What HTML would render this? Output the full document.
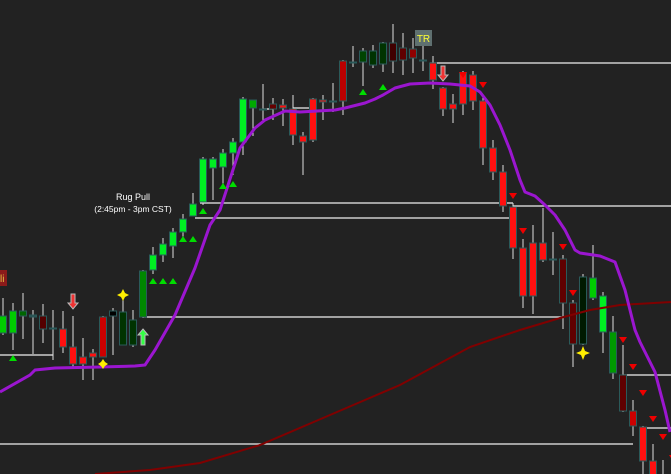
<!DOCTYPE html>
<html><head><meta charset="utf-8"><style>
html,body{margin:0;padding:0;background:#222222;width:671px;height:474px;overflow:hidden}
svg{display:block}
</style></head><body>
<svg id="s" width="671" height="474" xmlns="http://www.w3.org/2000/svg" style="font-family:'Liberation Sans',sans-serif">
<rect width="671" height="474" fill="#222"/>
<g stroke="#eee" stroke-width="1.3" fill="none">
<line x1="430" y1="63" x2="671" y2="63"/>
<line x1="200" y1="203" x2="513" y2="203"/>
<line x1="513" y1="206" x2="671" y2="206"/>
<line x1="195" y1="218" x2="513" y2="218"/>
<line x1="143" y1="317" x2="563" y2="317"/>
<line x1="0" y1="355" x2="53" y2="355"/>
<line x1="623" y1="375" x2="671" y2="375"/>
<line x1="643" y1="428" x2="671" y2="428"/>
<line x1="0" y1="444" x2="633" y2="444"/>
<line x1="263" y1="109" x2="273" y2="109"/>
<line x1="293" y1="108" x2="313" y2="108"/>
</g>
<g id="c"></g>
<polyline fill="none" stroke="#800000" stroke-width="2" points="95,474 150,470 200,463 260,445 330,415 400,385 470,347 520,330 560,318 590,310 620,305 671,302"/>
<polyline fill="none" stroke="#9b16d0" stroke-width="3" stroke-linejoin="round" points="0,392 30,375 35,370 55,368 100,367 135,366 145,365 155,350 175,315 195,268 210,225 220,210 240,148 255,128 265,120 285,111 300,112 335,110 345,108 365,103 375,99 383,95 395,88 410,84 430,83 450,84 470,86 480,92 490,105 500,125 510,150 520,180 525,192 535,196 545,205 555,215 565,230 575,250 580,253 600,256 615,262 625,290 635,330 640,342 655,372 665,410 670,432"/>
<g id="m"></g>
<rect x="415" y="30" width="17" height="16" fill="#5f7070"/>
<text x="423.5" y="42" font-size="10" fill="#ffff33" text-anchor="middle">TR</text>
<text x="133" y="200" font-size="9" fill="#fff" text-anchor="middle">Rug Pull</text>
<text x="133" y="212" font-size="8.5" fill="#fff" text-anchor="middle">(2:45pm - 3pm CST)</text>
<rect x="0" y="270" width="7" height="16" fill="#8b1a1a"/>
<text x="0" y="282" font-size="10" fill="#e0c040">li</text>
</svg>
<script>
var C=[[3,298,335,316,333,'#00cc00'],[13,303,350,311,333,'#00cc00'],[23,293,339,311,316,'#006600'],[33,310,354,315,317,'#2a5050'],[43,304,343,316,329,'#550000'],[53,310,360,328,329,'#2a5050'],[63,311,353,329,347,'#ff1010'],[73,316,368,347,364,'#ff1010'],[83,338,380,357,364,'#ff1010'],[93,349,380,353,357,'#ff1010'],[103,316,357,317,357,'#cc0000'],[113,308,355,311,316,'#000'],[123,299,345,312,345,'#003300'],[133,310,347,320,345,'#003300'],[143,270,318,271,317,'#008800'],[153,247,274,255,270,'#00ee22'],[163,238,262,244,255,'#00ee22'],[173,228,258,232,246,'#00ee22'],[183,214,240,219,232,'#00ee22'],[193,193,205,204,216,'#00ee22'],[203,157,205,159,202,'#00ee22'],[213,157,200,159,168,'#00ee22'],[223,149,185,153,167,'#00ee22'],[233,138,175,142,153,'#00ee22'],[243,97,155,99,142,'#00ee22'],[253,100,136,100,108,'#00aa00'],[263,84,120,109,109,'#2a5050'],[273,98,120,104,109,'#660000'],[283,99,126,105,108,'#ff1010'],[293,95,145,109,135,'#ff1010'],[303,132,175,136,142,'#ff1010'],[313,98,142,99,140,'#ff1010'],[323,95,120,100,102,'#ff1010'],[333,83,112,101,101,'#2a5050'],[343,60,115,61,101,'#bb0000'],[353,46,67,62,62,'#2a5050'],[363,48,86,51,62,'#004400'],[373,45,68,51,65,'#003300'],[383,42,72,43,64,'#003300'],[393,24,73,43,61,'#400000'],[403,33,75,48,60,'#600000'],[413,38,73,49,58,'#900000'],[423,46,71,60,60,'#2a5050'],[433,56,89,63,80,'#ff1010'],[443,87,116,88,109,'#ff1010'],[453,94,123,104,109,'#ff1010'],[463,71,115,73,104,'#ff1010'],[473,71,110,75,101,'#ff1010'],[483,95,165,101,148,'#ff1010'],[493,140,180,148,172,'#ff1010'],[503,165,212,172,206,'#ff1010'],[513,203,259,207,248,'#ff1010'],[523,239,308,248,296,'#ff1010'],[533,225,314,243,296,'#ff1010'],[543,208,262,243,260,'#ff1010'],[553,232,275,259,259,'#2a5050'],[563,255,329,259,303,'#600000'],[573,300,367,303,344,'#600000'],[583,274,345,277,344,'#001a00'],[593,245,300,278,298,'#00cc00'],[603,292,353,296,332,'#00ee22'],[613,316,379,332,373,'#009900'],[623,345,412,375,411,'#600000'],[633,400,436,411,426,'#cc0000'],[643,426,474,427,461,'#ff1010'],[653,444,480,461,480,'#ff1010'],[663,460,480,478,480,'#ff1010']];
var ns='http://www.w3.org/2000/svg',g=document.getElementById('c'),h='';
C.forEach(function(c){var x=c[0];h+='<line x1="'+x+'" y1="'+c[1]+'" x2="'+x+'" y2="'+c[2]+'" stroke="#ddd" stroke-width="1"/>';var hh=Math.max(c[4]-c[3],1);h+='<rect x="'+(x-3.5)+'" y="'+c[3]+'" width="7" height="'+hh+'" fill="'+c[5]+'" stroke="#2a5a5a" stroke-width="1"/>';});
g.innerHTML=h;
var m='';
[[13,358],[153,281],[163,281],[173,281],[183,239],[193,239],[203,211],[223,186],[233,184],[363,92],[383,87]].forEach(function(p){m+='<polygon points="'+(p[0]-4)+','+(p[1]+3)+' '+(p[0]+4)+','+(p[1]+3)+' '+p[0]+','+(p[1]-3)+'" fill="#00dd00"/>';});
[[463,75],[483,85],[513,196],[523,231],[563,247],[573,293],[623,340],[633,367],[643,393],[653,419],[663,437],[673,458]].forEach(function(p){m+='<polygon points="'+(p[0]-4)+','+(p[1]-3)+' '+(p[0]+4)+','+(p[1]-3)+' '+p[0]+','+(p[1]+3)+'" fill="#ee0000"/>';});
function star(x,y,r){return '<polygon points="'+x+','+(y-r)+' '+(x+2)+','+(y-2)+' '+(x+r)+','+y+' '+(x+2)+','+(y+2)+' '+x+','+(y+r)+' '+(x-2)+','+(y+2)+' '+(x-r)+','+y+' '+(x-2)+','+(y-2)+'" fill="#ffee00"/>';}
m+=star(123,295,6)+star(103,364,5)+star(583,353,7);
function dn(x,y){return '<polygon points="'+(x-2)+','+y+' '+(x+2)+','+y+' '+(x+2)+','+(y+9)+' '+(x+5)+','+(y+9)+' '+x+','+(y+15)+' '+(x-5)+','+(y+9)+' '+(x-2)+','+(y+9)+'" fill="#ee3333" stroke="#bbb" stroke-width="1"/>';}
m+=dn(73,294)+dn(443,66);
m+='<polygon points="143,329 148,335 145,335 145,345 141,345 141,335 138,335" fill="#33ff44" stroke="#bbb" stroke-width="1"/>';
document.getElementById('m').innerHTML=m;
</script>
</body></html>
